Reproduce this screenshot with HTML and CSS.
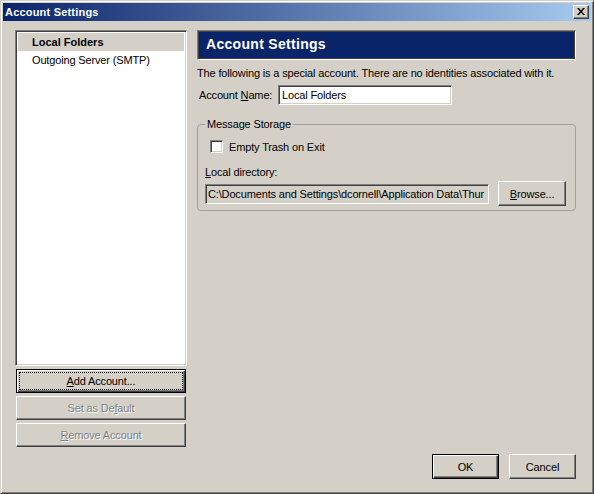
FILE: index.html
```html
<!DOCTYPE html>
<html>
<head>
<meta charset="utf-8">
<link rel="stylesheet" href="styles.css">
</head>
<body>
<div class="window">
  <div class="titlebar">
    <span class="title">Account Settings</span>
    <div class="close"><svg width="8" height="7" viewBox="0 0 8 7"><path d="M0 0h2l2 2.5L6 0h2L5 3.5 8 7H6L4 4.5 2 7H0l3-3.5z" fill="#000"/></svg></div>
  </div>
  <div class="content">
    <div class="main">
      <div class="left">
        <div class="list">
          <div class="item sel">Local Folders</div>
          <div class="item">Outgoing Server (SMTP)</div>
        </div>
        <div class="btn default focus"><span><u>A</u>dd Account...</span></div>
        <div class="btn disabled"><span>Set as De<u>f</u>ault</span></div>
        <div class="btn disabled"><span><u>R</u>emove Account</span></div>
      </div>
      <div class="right">
        <div class="header">Account Settings</div>
        <div class="desc">The following is a special account. There are no identities associated with it.</div>
        <div class="namerow">
          <span class="label">Account <u>N</u>ame:</span>
          <div class="field name">Local Folders</div>
        </div>
        <fieldset class="group">
          <legend>Message Storage</legend>
          <div class="checkrow">
            <span class="checkbox"></span>
            <span>Empty Trash on Exit</span>
          </div>
          <div class="dirlabel"><u>L</u>ocal directory:</div>
          <div class="dirrow">
            <div class="field dir">C:\Documents and Settings\dcornell\Application Data\Thur</div>
            <div class="btn browse"><span><u>B</u>rowse...</span></div>
          </div>
        </fieldset>
      </div>
    </div>
    <div class="footer">
      <div class="btn default small"><span>OK</span></div>
      <div class="btn small"><span>Cancel</span></div>
    </div>
  </div>
</div>
</body>
</html>
```

FILE: styles.css
```css
* { box-sizing: border-box; }
html, body { margin: 0; padding: 0; background: #d4d0c8; }
body {
  font-family: "Liberation Sans", Arial, sans-serif;
  font-size: 11px;
  letter-spacing: -0.15px;
  color: #000;
}
.window {
  width: 594px;
  height: 494px;
  background: #d4d0c8;
  border: 1px solid;
  border-color: #d4d0c8 #404040 #404040 #d4d0c8;
  box-shadow: inset 1px 1px 0 #fff, inset -1px -1px 0 #808080;
  padding: 2px;
  display: flex;
  flex-direction: column;
}
.titlebar {
  height: 18px;
  background: linear-gradient(to right, #0a246a, #a6caf0);
  display: flex;
  align-items: center;
  justify-content: space-between;
  padding: 0 2px 0 2px;
}
.title {
  color: #fff;
  font-weight: bold;
  font-size: 11px;
  letter-spacing: 0.2px;
  line-height: 18px;
}
.close {
  width: 16px;
  height: 14px;
  background: #d4d0c8;
  border: 1px solid;
  border-color: #fff #404040 #404040 #fff;
  box-shadow: inset -1px -1px 0 #808080;
  display: flex;
  align-items: center;
  justify-content: center;
  padding: 0 1px 1px 0;
}
.content {
  flex: 1;
  display: flex;
  flex-direction: column;
  padding: 9px 15px 12px 12px;
}
.main {
  display: flex;
  gap: 10px;
}
.left {
  width: 172px;
  display: flex;
  flex-direction: column;
}
.list {
  height: 336px;
  background: #fff;
  border: 1px solid;
  border-color: #808080 #fff #fff #808080;
  box-shadow: inset 1px 1px 0 #404040, inset -1px -1px 0 #d4d0c8;
  padding: 2px;
}
.item {
  height: 18px;
  line-height: 18px;
  padding-left: 14px;
  white-space: nowrap;
}
.item.sel {
  background: #d4d0c8;
  font-weight: bold;
  letter-spacing: 0;
}
.btn {
  background: #d4d0c8;
  border: 1px solid;
  border-color: #fff #404040 #404040 #fff;
  box-shadow: inset -1px -1px 0 #808080, inset 1px 1px 0 #d4d0c8;
  display: flex;
  align-items: center;
  justify-content: center;
  height: 24px;
  white-space: nowrap;
}
.left .btn {
  margin: 3px 1px 0 1px;
}
.btn.default {
  border-color: #000;
  box-shadow: inset 1px 1px 0 #fff, inset -1px -1px 0 #404040, inset -2px -2px 0 #808080;
}
.btn.focus {
  outline: 1px dotted #000;
  outline-offset: -4px;
}
.btn.disabled {
  color: #808080;
  text-shadow: 1px 1px 0 #fff;
}
.right {
  width: 379px;
  display: flex;
  flex-direction: column;
}
.header {
  height: 30px;
  background: #0a246a;
  color: #fff;
  font-weight: bold;
  font-size: 14px;
  letter-spacing: 0.3px;
  line-height: 27px;
  padding-left: 8px;
  border: 1px solid;
  border-color: #808080 #fff #fff #808080;
  box-shadow: inset 0 0 0 1px #404040;
}
.desc {
  margin-top: 6px;
  line-height: 14px;
  white-space: nowrap;
}
.namerow {
  display: flex;
  align-items: center;
  margin-top: 5px;
  height: 20px;
}
.label {
  margin-left: 2px;
  width: 79px;
}
.field {
  height: 20px;
  border: 1px solid;
  border-color: #808080 #fff #fff #808080;
  box-shadow: inset 1px 1px 0 #404040, inset -1px -1px 0 #d4d0c8;
  padding: 0 3px;
  line-height: 18px;
  white-space: nowrap;
  overflow: hidden;
}
.field.name {
  width: 174px;
  background: #fff;
}
.group {
  margin: 12px 0 0 0;
  border: 1px solid #a0a0a0;
  border-radius: 4px;
  padding: 0 9px 4px 7px;
  min-width: 0;
}
.group legend {
  padding: 0 2px;
  margin-left: 0;
  line-height: 14px;
}
.checkrow {
  display: flex;
  align-items: center;
  margin-top: 9px;
  margin-left: 5px;
  height: 13px;
  gap: 6px;
}
.checkbox {
  width: 13px;
  height: 13px;
  background: #fff;
  border: 1px solid;
  border-color: #808080 #fff #fff #808080;
  box-shadow: inset 1px 1px 0 #404040, inset -1px -1px 0 #d4d0c8;
}
.dirlabel {
  margin-top: 12px;
  line-height: 14px;
}
.dirrow {
  display: flex;
  align-items: center;
  height: 25px;
  margin-top: 2px;
  gap: 9px;
}
.field.dir {
  width: 285px;
  background: #d4d0c8;
  padding-left: 2px;
}
.btn.browse {
  width: 68px;
  height: 25px;
}
.footer {
  margin-top: auto;
  display: flex;
  justify-content: flex-end;
  gap: 10px;
}
.btn.small {
  width: 67px;
  height: 25px;
}
```
